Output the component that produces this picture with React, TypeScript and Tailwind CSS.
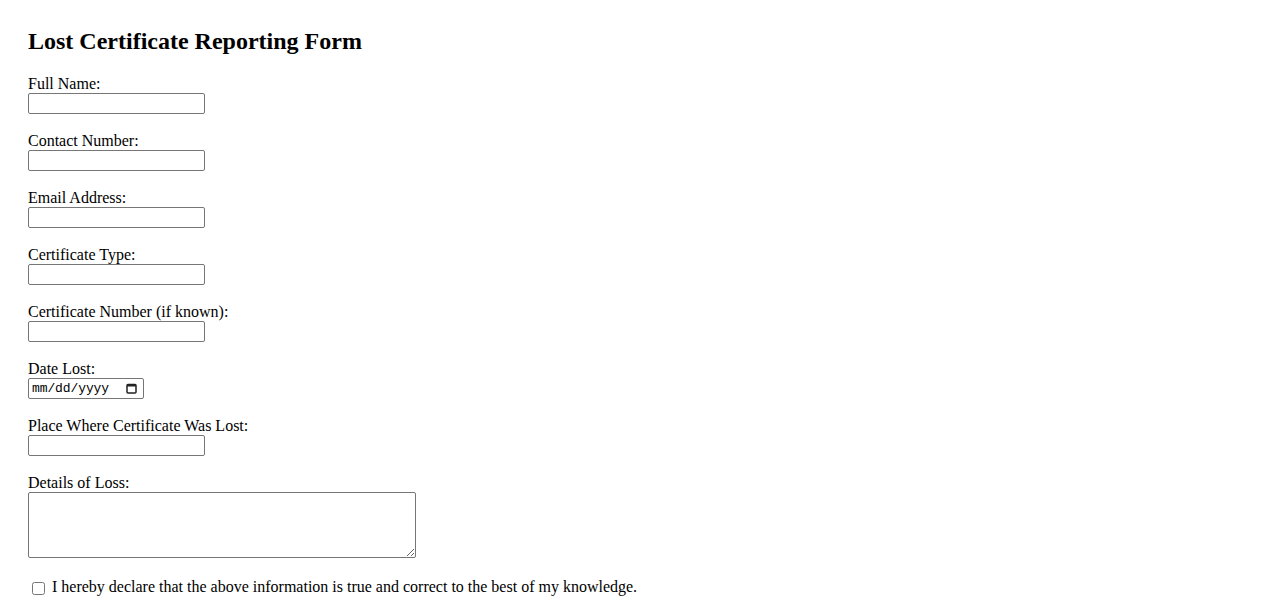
import React from "react";

const serif = { fontFamily: '"Liberation Serif", "Times New Roman", serif' };

function TextField({ label }: { label: string }) {
  return (
    <div className="flex flex-col items-start mb-[19px]">
      <label className="block text-[16px] leading-[15px] pb-[2px] text-black">{label}</label>
      <input
        type="text"
        className="block w-[177px] h-[21px] border border-[#767676] rounded-[2px] bg-white px-[2px] text-[13px] outline-none"
      />
    </div>
  );
}

export default function App() {
  return (
    <div className="bg-white min-h-[601px] pl-[28px] pt-[27px] text-black" style={serif}>
      <h2 className="text-[24px] font-bold leading-[28px] mb-[21px]">Lost Certificate Reporting Form</h2>
      <form>
        <TextField label="Full Name:" />
        <TextField label="Contact Number:" />
        <TextField label="Email Address:" />
        <TextField label="Certificate Type:" />
        <TextField label="Certificate Number (if known):" />
        <div className="flex flex-col items-start mb-[19px]">
          <label className="block text-[16px] leading-[15px] pb-[2px]">Date Lost:</label>
          <div className="flex items-center justify-between w-[116px] h-[21px] border border-[#767676] rounded-[2px] bg-white pl-[3px] pr-[6px]">
            <span
              className="text-[13px] leading-[15px] text-black tracking-[-0.1px]"
              style={{ fontFamily: '"Liberation Mono", "DejaVu Sans Mono", monospace' }}
            >
              mm/dd/yyyy
            </span>
            <svg width="11" height="11" viewBox="0 0 11 11">
              <rect x="1" y="1.5" width="9" height="8.5" rx="1" fill="none" stroke="#222" strokeWidth="1.5" />
              <rect x="1" y="1" width="9" height="2.5" fill="#222" />
            </svg>
          </div>
        </div>
        <TextField label="Place Where Certificate Was Lost:" />
        <div className="flex flex-col items-start">
          <label className="block text-[16px] leading-[15px] pb-[2px]">Details of Loss:</label>
          <textarea className="block w-[388px] h-[66px] border border-[#767676] rounded-[2px] bg-white resize-y outline-none text-[13px]" />
        </div>
        <div className="flex items-center mt-[20px] h-[18px] text-[16px] leading-[18px]">
          <input type="checkbox" className="w-[13px] h-[13px] ml-[4px] mr-[3px] mt-[2px]" />
          <span className="ml-[4px]">I hereby declare that the above information is true and correct to the best of my knowledge.</span>
        </div>
      </form>
    </div>
  );
}
